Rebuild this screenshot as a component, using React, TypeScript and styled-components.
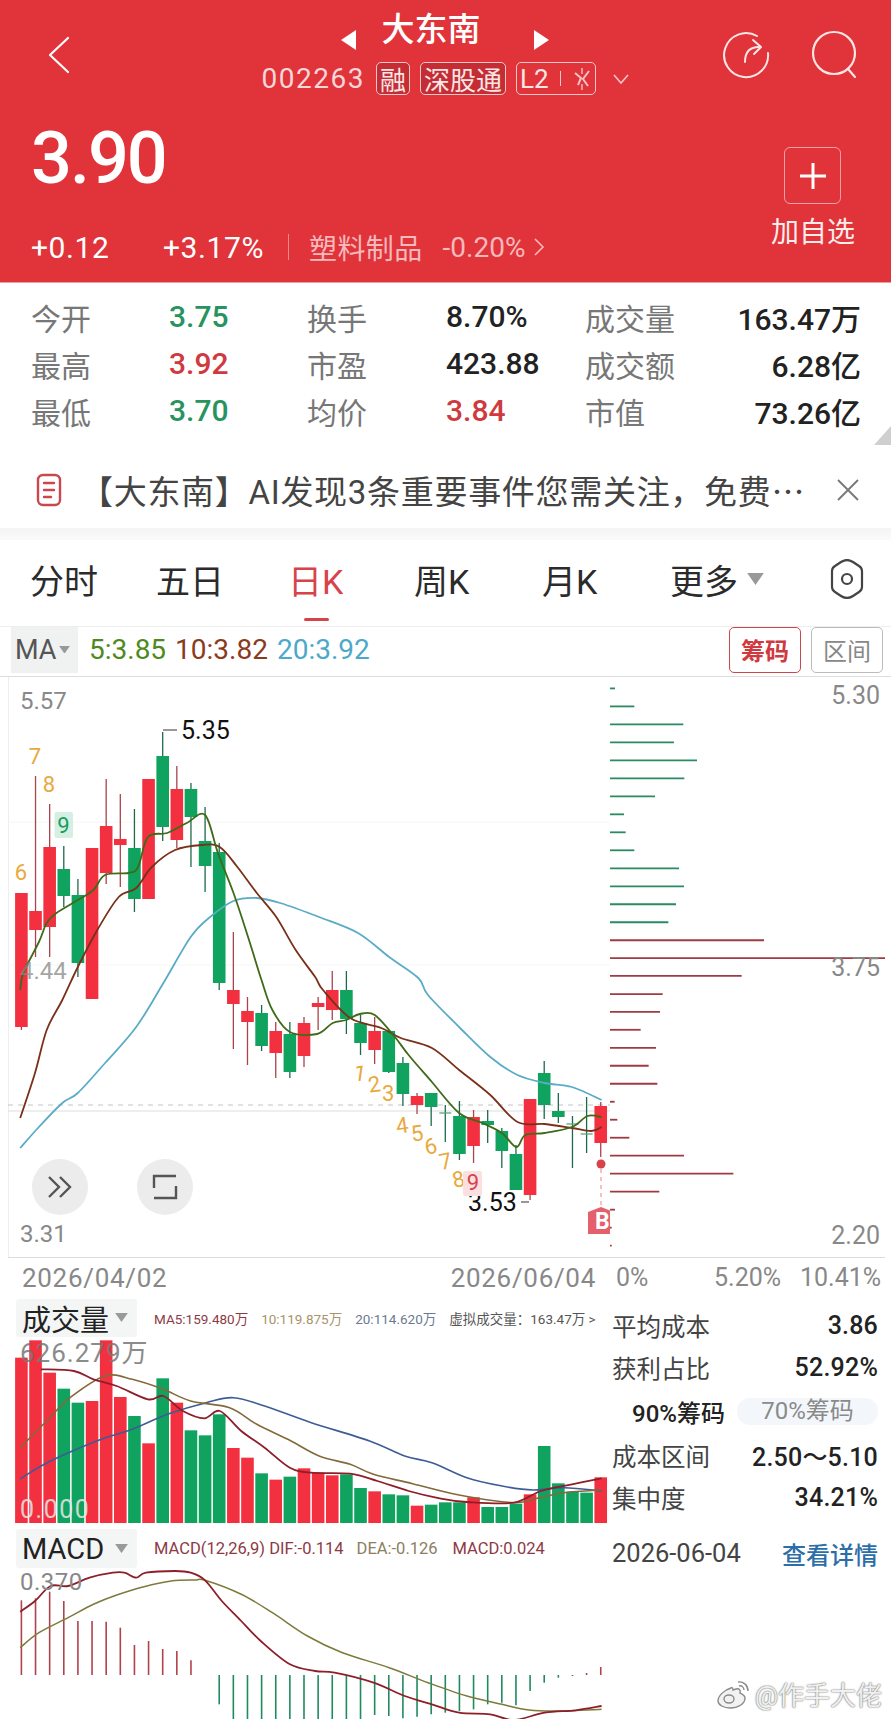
import React from 'react'
import styled, { createGlobalStyle } from 'styled-components'

const FONT = `Roboto, "Noto Sans CJK SC", "Noto Sans", sans-serif`
const RED = '#f2303f'
const GREEN = '#0fa35f'

const GlobalStyle = createGlobalStyle`
  html, body {
    margin: 0;
    padding: 0;
    background: #fff;
    font-family: ${FONT};
  }
`

const Page = styled.div`
  position: relative;
  width: 891px;
  height: 1719px;
  overflow: hidden;
  background: #fff;
`

/* header */
const Header = styled.header`
  height: 283px;
  background: #e1333a;
  color: #fff;
  border-bottom: 1px solid #e8a0a3;
  box-sizing: border-box;
`

const TopBar = styled.div`
  display: grid;
  grid-template-columns: 1fr auto 1fr;
  height: 110px;
`

const TopLeft = styled.div`
  display: flex;
  align-items: center;
  padding-left: 46px;
`

const TopRight = styled.div`
  display: flex;
  align-items: center;
  justify-content: flex-end;
  gap: 40px;
  padding-right: 32px;
`

const TitleBlock = styled.div`
  display: flex;
  flex-direction: column;
  align-items: center;
  padding-top: 8px;
`

const TitleRow = styled.div`
  display: flex;
  align-items: flex-end;
`

const Title = styled.div`
  font-size: 33px;
  line-height: 44px;
  font-weight: 500;
  margin: 0 54px 0 25px;
`

const Caret = styled.svg`
  display: block;
  margin-bottom: 2px;
`

const CodeRow = styled.div`
  display: flex;
  align-items: center;
  gap: 10px;
  margin-top: 10px;
  color: #f6d7d8;
`

const Code = styled.span`
  font-size: 28px;
  letter-spacing: 1.5px;
  margin-right: 1px;
`

const Tag = styled.span<{ $plain?: boolean }>`
  display: inline-flex;
  align-items: center;
  gap: 11px;
  height: 33px;
  padding: 0 3px;
  box-sizing: border-box;
  border: 1.5px solid #f4c6c8;
  border-radius: 5px;
  font-size: 26px;
  color: #fbe6e6;
  background: ${(p) => (p.$plain ? 'transparent' : '#c52d34')};
`

const TagDivider = styled.i`
  width: 1px;
  height: 15px;
  background: #f4c6c8;
`

const ChevronSlot = styled.span`
  display: flex;
  margin-left: 6px;
`

const HeaderBody = styled.div`
  display: flex;
  justify-content: space-between;
  padding: 0 36px 0 31px;
`

const PriceCol = styled.div`
  display: flex;
  flex-direction: column;
`

const Price = styled.div`
  font-size: 72px;
  line-height: 76px;
  height: 76px;
  margin-top: 11px;
  margin-bottom: -3px;
  letter-spacing: -2px;
  font-weight: 500;
`

const ChangeRow = styled.div`
  display: flex;
  align-items: center;
  height: 36px;
  margin-top: 35px;
  font-size: 30px;
`

const ChangeValue = styled.span<{ $width: number }>`
  width: ${(p) => p.$width}px;
  letter-spacing: 0.6px;
`

const ChangeDivider = styled.i`
  width: 1px;
  height: 26px;
  margin: 0 20px;
  background: #ee8a8e;
`

const Sector = styled.span`
  color: #f6b9bb;
  font-size: 28px;
  letter-spacing: 0.4px;
`

const SectorChange = styled.span`
  color: #f6b9bb;
  font-size: 28px;
  margin-left: 20px;
`

const SectorArrow = styled.svg`
  margin-left: 8px;
`

const AddCol = styled.div`
  display: flex;
  flex-direction: column;
  align-items: center;
`

const AddBox = styled.div`
  display: flex;
  align-items: center;
  justify-content: center;
  width: 57px;
  height: 57px;
  margin-top: 37px;
  border: 1.5px solid #f0a0a4;
  border-radius: 6px;
  box-sizing: border-box;
`

const AddLabel = styled.div`
  margin-top: 14px;
  font-size: 28px;
  line-height: 30px;
  color: #fdecec;
`

/* stat grid */
const Stats = styled.section`
  position: relative;
  display: grid;
  grid-template-columns: 138px 138px 139px 139px 110px 1fr;
  grid-auto-rows: 47px;
  align-items: center;
  height: 162px;
  padding: 10px 30px 0 31px;
  box-sizing: border-box;
  font-size: 30px;
`

const StatLabel = styled.span`
  color: #777;
  font-size: 30px;
`

const StatValue = styled.span<{ $tone?: 'up' | 'down'; $right?: boolean }>`
  color: ${(p) => (p.$tone === 'up' ? '#cf3a40' : p.$tone === 'down' ? '#27935f' : '#222')};
  text-align: ${(p) => (p.$right ? 'right' : 'left')};
  font-weight: 500;
`

const Corner = styled.i`
  position: absolute;
  right: 0;
  bottom: 0;
  width: 0;
  height: 0;
  border-style: solid;
  border-width: 0 0 19px 17px;
  border-color: transparent transparent #cfcfcf transparent;
`

/* news strip */
const News = styled.section`
  display: flex;
  align-items: center;
  height: 83px;
  padding: 6px 28px 0 36px;
  box-sizing: border-box;
  font-size: 33px;
  letter-spacing: 0.7px;
  color: #444;
`

const NewsText = styled.span`
  width: 730px;
  margin-left: 18px;
  margin-right: 26px;
  white-space: nowrap;
`

const Band = styled.div`
  height: 12px;
  background: linear-gradient(#f4f4f4, #fafafa);
`

/* period tabs */
const Tabs = styled.nav`
  display: flex;
  align-items: center;
  height: 87px;
  padding: 0 26px 8px 30px;
  box-sizing: border-box;
  border-bottom: 1px solid #eee;
`

const Tab = styled.span<{ $active?: boolean; $slot?: number }>`
  position: relative;
  flex: none;
  width: ${(p) => (p.$slot ? `${p.$slot}px` : 'auto')};
  font-size: 34px;
  color: ${(p) => (p.$active ? '#d8434b' : '#2b2b2b')};

  &::after {
    content: '';
    display: ${(p) => (p.$active ? 'block' : 'none')};
    position: absolute;
    left: 16px;
    bottom: -17px;
    width: 25px;
    height: 3px;
    border-radius: 2px;
    background: #d8434b;
  }
`

const TabMore = styled.div`
  display: flex;
  align-items: center;
  gap: 9px;
`

const TabIcon = styled.div`
  margin-left: auto;
  display: flex;
`

/* MA row */
const MaRow = styled.div`
  display: flex;
  align-items: center;
  height: 50px;
  padding: 0 8px 4px 11px;
  box-sizing: border-box;
  border-bottom: 1px solid #ddd;
  font-size: 28px;
`

const MaBox = styled.div`
  display: flex;
  align-items: center;
  gap: 3px;
  width: 67px;
  height: 46px;
  padding-left: 4px;
  box-sizing: border-box;
  background: #f0f1f1;
  color: #555;
  font-size: 27px;
  margin-right: 11px;
`

const MaValue = styled.span<{ $color: string }>`
  color: ${(p) => p.$color};
  margin-right: 9px;
`

const MaSpacer = styled.div`
  flex: 1;
`

const MaButton = styled.div<{ $active?: boolean }>`
  display: flex;
  align-items: center;
  justify-content: center;
  width: 72px;
  height: 46px;
  margin-left: 10px;
  box-sizing: border-box;
  border: 1.5px solid ${(p) => (p.$active ? '#c9474d' : '#bbb')};
  border-radius: 5px;
  font-size: 24px;
  font-weight: ${(p) => (p.$active ? 700 : 400)};
  color: ${(p) => (p.$active ? '#cf3a40' : '#888')};
`

/* charts */
const ChartRow = styled.div`
  position: relative;
  display: flex;
  height: 580px;
  border-bottom: 1px solid #ddd;
  margin-left: 8px;
  margin-right: 6px;
`

const ChartSvg = styled.svg`
  display: block;
  flex: none;
`

const RoundButton = styled.div<{ $left: number }>`
  position: absolute;
  left: ${(p) => p.$left}px;
  top: 482px;
  display: flex;
  align-items: center;
  justify-content: center;
  width: 56px;
  height: 56px;
  border-radius: 50%;
  background: #ececec;
`

const AxisRow = styled.div`
  display: flex;
  height: 39px;
  align-items: center;
  font-size: 25px;
  color: #888;
`

const AxisDates = styled.div`
  display: flex;
  justify-content: space-between;
  width: 610px;
  padding: 0 14px 0 22px;
  box-sizing: border-box;
  font-size: 26px;
  letter-spacing: 0.7px;
`

const AxisPercents = styled.div`
  display: grid;
  grid-template-columns: 98px 86px auto;
  padding-left: 6px;
`

const Lower = styled.div`
  display: flex;
`

const LeftCol = styled.div`
  width: 610px;
  flex: none;
  padding-top: 2px;
`

const SectionHead = styled.div<{ $height: number; $mt?: number; $mb?: number }>`
  display: flex;
  align-items: center;
  height: ${(p) => p.$height}px;
  margin-top: ${(p) => p.$mt ?? 0}px;
  margin-bottom: ${(p) => p.$mb ?? 0}px;
`

const HeadBox = styled.div`
  display: flex;
  align-items: center;
  justify-content: space-between;
  width: 121px;
  height: 100%;
  margin-left: 16px;
  margin-right: 17px;
  padding: 0 9px 0 6px;
  box-sizing: border-box;
  background: #f4f5f5;
  border-radius: 3px;
  font-size: 29px;
  color: #222;
`

const HeadLegend = styled.div<{ $size: number }>`
  display: flex;
  white-space: nowrap;
  font-size: ${(p) => p.$size}px;
`

const LegendItem = styled.span<{ $color: string; $gap: number }>`
  color: ${(p) => p.$color};
  margin-right: ${(p) => p.$gap}px;
`

const RightCol = styled.div`
  flex: 1;
  padding: 7px 13px 0 2px;
  color: #333;
`

const SummaryRow = styled.div<{ $mt?: number }>`
  display: flex;
  justify-content: space-between;
  align-items: center;
  height: 42px;
  margin-top: ${(p) => p.$mt ?? 0}px;
  font-size: 24.5px;
  color: #444;
`

const SummaryValue = styled.span`
  font-size: 25px;
  letter-spacing: 0.2px;
  font-weight: 500;
  color: #222;
`

const RangeTabs = styled.div`
  display: flex;
  align-items: center;
  height: 46px;
  padding-left: 20px;
  font-size: 24px;
`

const RangeActive = styled.span`
  width: 105px;
  color: #222;
  font-weight: 500;
`

const RangeIdle = styled.span`
  flex: 1;
  height: 27px;
  line-height: 27px;
  text-align: center;
  color: #8a8a8a;
  background: #f3f7fb;
  border-radius: 13px;
`

const DetailLink = styled.span`
  color: #2c6ea8;
  font-size: 24px;
  font-weight: 500;
`

const DateText = styled.span`
  font-size: 25.5px;
  color: #444;
`

const Watermark = styled.div`
  position: absolute;
  right: 9px;
  bottom: 7px;
  display: flex;
  align-items: center;
  gap: 4px;
  font-size: 26px;
  color: #f0f0f0;
  text-shadow: 0 0 2px #777, 0 0 1px #777;
`

/* data, in page pixels */
type Candle = [string, number, number, number, number]
const candles: Candle[] = [
  ['r', 893, 893, 1027, 1030],
  ['r', 776, 911, 930, 957],
  ['r', 804, 847, 927, 957],
  ['g', 846, 869, 896, 907],
  ['g', 879, 895, 963, 977],
  ['r', 848, 848, 999, 999],
  ['r', 779, 826, 873, 884],
  ['r', 794, 839, 845, 887],
  ['g', 809, 848, 899, 912],
  ['r', 779, 779, 899, 899],
  ['g', 732, 756, 827, 841],
  ['r', 766, 789, 840, 848],
  ['g', 783, 789, 817, 867],
  ['g', 807, 841, 866, 892],
  ['g', 843, 852, 983, 990],
  ['r', 932, 990, 1004, 1049],
  ['r', 997, 1011, 1022, 1065],
  ['g', 1005, 1013, 1046, 1051],
  ['r', 1022, 1031, 1053, 1078],
  ['g', 1022, 1034, 1072, 1078],
  ['r', 1017, 1023, 1056, 1067],
  ['r', 997, 1003, 1007, 1030],
  ['r', 971, 990, 1010, 1020],
  ['g', 971, 990, 1019, 1034],
  ['g', 1015, 1023, 1043, 1055],
  ['r', 1017, 1031, 1050, 1064],
  ['g', 1030, 1031, 1072, 1073],
  ['g', 1057, 1063, 1094, 1106],
  ['r', 1093, 1096, 1105, 1114],
  ['g', 1093, 1093, 1107, 1126],
  ['g', 1105, 1113, 1114, 1142],
  ['g', 1101, 1116, 1154, 1160],
  ['r', 1110, 1117, 1146, 1163],
  ['g', 1110, 1121, 1125, 1143],
  ['g', 1128, 1131, 1151, 1168],
  ['g', 1145, 1154, 1190, 1190],
  ['r', 1099, 1099, 1195, 1200],
  ['g', 1061, 1073, 1105, 1119],
  ['g', 1093, 1111, 1117, 1123],
  ['g', 1116, 1124, 1125, 1168],
  ['g', 1097, 1134, 1135, 1153],
  ['r', 1102, 1106, 1143, 1157],
]

const xOf = (i: number) => 21.4 + 14.13 * i
const zx = (v: number) => (v / 2.57).toFixed(1)
const zoomY = (base: number, pts: number[][]) => pts.map(([x, y]) => [x, base + y / 3])

// catmull-rom through the sampled points so the averages read as curves
const toPath = (pts: number[][]) => {
  const p = pts.map(([x, y]) => [x / 2.57, y])
  const f = (n: number) => n.toFixed(1)
  let d = `M${f(p[0][0])} ${f(p[0][1])}`
  for (let i = 0; i < p.length - 1; i++) {
    const a = p[Math.max(i - 1, 0)]
    const b = p[i]
    const c = p[i + 1]
    const e = p[Math.min(i + 2, p.length - 1)]
    d += `C${f(b[0] + (c[0] - a[0]) / 6)} ${f(b[1] + (c[1] - a[1]) / 6)} ${f(c[0] - (e[0] - b[0]) / 6)} ${f(c[1] - (e[1] - b[1]) / 6)} ${f(c[0])} ${f(c[1])}`
  }
  return d
}

const ma5 = [[52,990],[60,973],[100,942],[120,923],[145,913],[200,900],[240,890],[270,875],[330,873],[355,867],[380,837],[430,833],[480,823],[527,815],[560,853],[600,893],[640,940],[672,980],[700,1010],[745,1032],[815,1034],[855,1023],[890,1020],[925,1014],[963,1015],[1015,1037],[1050,1055],[1110,1082],[1180,1113],[1240,1123],[1290,1133],[1327,1147],[1350,1135],[1400,1133],[1470,1127],[1510,1116],[1546,1117]]
const ma10 = [[52,1118],[90,1073],[120,1030],[160,1000],[200,967],[250,930],[305,897],[350,888],[390,867],[450,850],[520,845],[565,847],[610,867],[660,893],[710,917],[760,950],[810,977],[830,990],[900,1018],[980,1028],[1030,1038],[1110,1048],[1180,1070],[1260,1095],[1330,1122],[1400,1124],[1470,1128],[1520,1131],[1546,1127]]
const ma20 = [[52,1148],[100,1127],[160,1103],[200,1093],[270,1063],[350,1027],[420,983],[490,937],[540,917],[600,901],[660,898],[720,903],[820,917],[920,933],[1000,957],[1075,978],[1100,995],[1180,1027],[1260,1057],[1330,1075],[1400,1083],[1470,1087],[1546,1100]]

const chips: [number, number][] = [
  [22,45],[69,103],[116,250],[163,222],[210,291],[257,253],[304,165],[351,72],[398,77],[445,103],[492,237],[539,252],[586,228],[633,205],
  [680,492],[727,855],[773,425],[821,188],[867,180],[914,122],[961,168],[1008,146],[1055,172],[1102,44],[1149,52],[1196,88],[1243,252],[1290,400],[1337,178],[1384,45],[1431,35],[1478,35],
]

const volTops = [200,148,245,293,335,330,148,318,375,457,262,335,418,433,370,471,500,547,566,557,532,545,553,550,591,601,610,613,644,641,634,634,619,648,648,638,610,465,577,602,605,559]
const volMa5 = [[105,235],[190,240],[240,265],[300,285],[380,325],[420,315],[470,360],[525,382],[565,360],[620,420],[680,470],[745,530],[800,545],[900,548],[970,570],[1050,600],[1130,622],[1200,633],[1320,635],[1390,600],[1470,580],[1546,562]]
const volMa10 = [[52,470],[120,390],[180,320],[270,255],[340,265],[420,295],[490,330],[590,350],[660,400],[740,445],[820,495],[900,520],[960,550],[1060,578],[1180,612],[1320,635],[1380,622],[1450,605],[1546,597]]
const volMa20 = [[52,563],[130,510],[260,445],[340,415],[430,370],[530,335],[600,320],[680,345],[800,395],[950,450],[1040,495],[1110,515],[1200,560],[1290,585],[1370,597],[1450,590],[1546,600]]

const macdUp = [238,232,212,240,300,300,302,320,372,360,384,390,418]
const macdDown = [550,640,640,640,640,640,640,640,640,640,640,582,585,592,587,580,575,570,565,550,545,553,510,485,470,465]
const dif = [[52,272],[90,240],[130,195],[175,195],[230,170],[290,155],[320,155],[350,170],[375,155],[450,150],[490,155],[527,178],[570,240],[620,300],[670,360],[745,430],[810,450],[860,455],[960,485],[1040,525],[1110,550],[1180,575],[1260,580],[1320,597],[1400,575],[1480,568],[1546,555]]
const dea = [[52,380],[100,335],[175,290],[240,250],[300,222],[370,197],[440,180],[500,177],[527,178],[620,220],[700,275],[790,345],[880,395],[1000,440],[1100,485],[1200,525],[1290,550],[1360,567],[1430,570],[1546,565]]

const seqNumbers: [string, number, number, number][] = [
  ['1', 925, 1073, 8], ['2', 962, 1084, -8], ['3', 998, 1093, 0], ['4', 1033, 1125, -8], ['5', 1072, 1133, -8],
  ['6', 1107, 1146, -12], ['7', 1145, 1161, -12], ['8', 1178, 1179, -12],
]

const iconProps = { fill: 'none', stroke: '#fff', strokeLinecap: 'round' as const, strokeLinejoin: 'round' as const }

const BackIcon = () => (
  <svg width="26" height="40" viewBox="0 0 26 40" {...iconProps} strokeWidth="2.2">
    <path d="M22 3 4 20l18 17" />
  </svg>
)

const ShareIcon = () => (
  <svg width="48" height="50" viewBox="0 0 48 50" {...iconProps} stroke="#fbe6e6" strokeWidth="2">
    <path d="M34 6A22 22 0 1 0 45 23" />
    <path d="M22 32c0-9 4-15 14-15" />
    <path d="m30 10 8 7-7 7" />
  </svg>
)

const SearchIcon = () => (
  <svg width="48" height="50" viewBox="0 0 48 50" {...iconProps} stroke="#fbe6e6" strokeWidth="2.2">
    <circle cx="23" cy="23" r="21" />
    <path d="m37 39 7 8" />
  </svg>
)

const BoltIcon = () => (
  <svg width="20" height="24" viewBox="0 0 20 24" fill="none" stroke="#f7c2c4" strokeWidth="2">
    <path d="M3 6 9 11 6 18M17 4l-6 8 5 7" />
    <path d="M10 1v6M10 17v6" stroke="#e99" />
  </svg>
)

const SmallChevron = () => (
  <svg width="18" height="12" viewBox="0 0 18 12" fill="none" stroke="#f4c6c8" strokeWidth="1.6">
    <path d="m2 2 7 8 7-8" />
  </svg>
)

const NewsIcon = () => (
  <svg width="26" height="34" viewBox="0 0 26 34" fill="none" stroke="#c9474d" strokeWidth="2.4" strokeLinecap="round">
    <rect x="2" y="2" width="22" height="30" rx="5" />
    <path d="M8 10h10M8 17h10M8 24h7" />
  </svg>
)

const CloseIcon = () => (
  <svg width="24" height="24" viewBox="0 0 24 24" fill="none" stroke="#777" strokeWidth="1.8">
    <path d="m2 2 20 20M22 2 2 22" />
  </svg>
)

const SettingsIcon = () => (
  <svg width="36" height="40" viewBox="0 0 36 40" fill="none" stroke="#444" strokeWidth="2.2" strokeLinejoin="round">
    <path d="M12 3a11 11 0 0 1 12 0l6 4a6 6 0 0 1 3 5v16a6 6 0 0 1-3 5l-6 4a11 11 0 0 1-12 0l-6-4a6 6 0 0 1-3-5V12a6 6 0 0 1 3-5Z" />
    <circle cx="18" cy="20" r="5" />
  </svg>
)

const DownTriangle = ({ size = 14, color = '#999' }: { size?: number; color?: string }) => (
  <svg width={size} height={size * 0.7} viewBox="0 0 14 10">
    <path d="M0 0h14L7 10Z" fill={color} />
  </svg>
)

const WeiboIcon = () => (
  <svg width="34" height="30" viewBox="0 0 34 30" fill="#f2f2f2" stroke="#8a8a8a" strokeWidth="1.4">
    <path d="M14 9C7 11 1 17 1 22c0 4 6 7 12 7 8 0 15-4 15-10 0-3-3-4-5-5 1-3-1-5-4-4l-3 1c0-2-1-3-2-2Z" />
    <ellipse cx="12" cy="20" rx="5" ry="4" fill="none" />
    <path d="M21 3c5-1 10 3 10 9M22 7c3-1 5 2 5 4" fill="none" />
  </svg>
)

const MainChart = () => (
  <ChartSvg width="602" height="580" viewBox="8 677 602 580" fontFamily={FONT}>
    <line x1="8.5" y1="677" x2="8.5" y2="1257" stroke="#eee" />
    <line x1="8" y1="822" x2="610" y2="822" stroke="#f6f6f6" />
    <line x1="8" y1="965" x2="610" y2="965" stroke="#f6f6f6" />
    <line x1="8" y1="1111" x2="610" y2="1111" stroke="#ddd" />
    <line x1="8" y1="1105" x2="610" y2="1105" stroke="#c4c4c4" strokeDasharray="5 5" />
    {candles.map(([c, hi, top, bot, lo], i) => {
      const x = xOf(i)
      const h = bot - top
      const thin = h <= 1
      return (
        <g key={i}>
          <line x1={x} y1={hi} x2={x} y2={lo} stroke={c === 'r' ? '#a9434c' : '#1d6a4a'} strokeWidth="1.3" />
          {thin ? (
            <line x1={x - 6} y1={top} x2={x + 6} y2={top} stroke="#5aa583" strokeWidth="1.3" />
          ) : (
            <rect x={x - 6.3} y={top} width="12.6" height={h} fill={c === 'r' ? RED : GREEN} />
          )}
        </g>
      )
    })}
    <path d={toPath(ma20)} fill="none" stroke="#5aacc6" strokeWidth="1.8" />
    <path d={toPath(ma10)} fill="none" stroke="#7a3018" strokeWidth="1.8" />
    <path d={toPath(ma5)} fill="none" stroke="#3f6a18" strokeWidth="1.8" />

    <g fontSize="24" fill="#888">
      <text x="20" y="709">5.57</text>
      <text x="20" y="979" opacity="0.75">4.44</text>
      <text x="20" y="1242">3.31</text>
    </g>
    <g fontSize="25" fill="#111">
      <line x1="163" y1="730" x2="177" y2="730" stroke="#555" strokeWidth="1.2" />
      <text x="181" y="739">5.35</text>
      <text x="468" y="1211">3.53</text>
      <line x1="521" y1="1202" x2="529" y2="1202" stroke="#555" strokeWidth="1.2" />
    </g>

    <g fontSize="22" fill="#e8a93c" textAnchor="middle">
      <text x="21" y="880">6</text>
      <text x="35" y="764">7</text>
      <text x="49" y="792">8</text>
      {seqNumbers.map(([n, x, y, r]) => (
        <text key={n} x={zx(x)} y={y + 8} transform={`rotate(${r} ${zx(x)} ${y})`}>{n}</text>
      ))}
    </g>
    <rect x="54.5" y="812" width="18.5" height="26" rx="2" fill="#d5efe2" />
    <text x="63.5" y="833" fontSize="22" fill="#1b9c63" textAnchor="middle">9</text>
    <rect x="463" y="1171" width="19" height="25" rx="2" fill="#fbe0e2" />
    <text x="473" y="1190" fontSize="22" fill="#d8434b" textAnchor="middle">9</text>

    <circle cx="601" cy="1164" r="4.5" fill="#d8434b" />
    <line x1="601" y1="1169" x2="601" y2="1205" stroke="#e8848a" strokeDasharray="4 4" />
    <path d="M588 1212l13-5 13 5v22h-26Z" fill="#e4606c" />
    <text x="595" y="1229" fontSize="23" fontWeight="700" fill="#fff">B</text>
  </ChartSvg>
)

const ChipChart = () => (
  <ChartSvg width="275" height="580" viewBox="610 677 275 580" fontFamily={FONT}>
    {chips.map(([y, end], i) => (
      <line
        key={y}
        x1="610"
        y1={680 + y / 2.613}
        x2={600 + end / 3}
        y2={680 + y / 2.613}
        stroke={i < 14 ? '#2a8a62' : '#a03a42'}
        strokeWidth="1.8"
      />
    ))}
    <g fontSize="25" fill="#888" textAnchor="end">
      <text x="880" y="704">5.30</text>
      <text x="880" y="976">3.75</text>
      <text x="880" y="1244">2.20</text>
    </g>
  </ChartSvg>
)

const VolumeChart = () => (
  <ChartSvg width="610" height="184" viewBox="0 1338 610 184" fontFamily={FONT}>
    {volTops.map((t, i) => (
      <rect
        key={i}
        x={xOf(i) - 6.3}
        y={1290 + t / 3}
        width="12.6"
        height={1522 - (1290 + t / 3)}
        fill={candles[i][0] === 'r' ? RED : GREEN}
      />
    ))}
    <path d={toPath(zoomY(1290, volMa20))} fill="none" stroke="#3d5c96" strokeWidth="1.6" />
    <path d={toPath(zoomY(1290, volMa10))} fill="none" stroke="#84693a" strokeWidth="1.6" />
    <path d={toPath(zoomY(1290, volMa5))} fill="none" stroke="#8d1f2a" strokeWidth="1.8" />
    <text x="20" y="1361" fontSize="26" letterSpacing="1" fill="#777" opacity="0.85">626.279万</text>
    <text x="20" y="1517" fontSize="25" letterSpacing="1.5" fill="#e6e6e6" opacity="0.85">0.000</text>
  </ChartSvg>
)

const MacdChart = () => (
  <ChartSvg width="610" height="152" viewBox="0 1567 610 152" fontFamily={FONT}>
    {macdUp.map((t, i) => (
      <line key={i} x1={xOf(i)} y1={1520 + t / 3} x2={xOf(i)} y2="1674" stroke="#b0424b" strokeWidth="1.6" />
    ))}
    {macdDown.map((b, i) => (
      <line key={i} x1={xOf(i + 14)} y1="1674" x2={xOf(i + 14)} y2={1520 + b / 3} stroke="#1f8a5e" strokeWidth="1.6" />
    ))}
    <line x1={xOf(40)} y1="1672" x2={xOf(40)} y2="1674" stroke="#b0424b" strokeWidth="1.6" />
    <line x1={xOf(41)} y1="1666" x2={xOf(41)} y2="1674" stroke="#b0424b" strokeWidth="1.6" />
    <path d={toPath(zoomY(1520, dea))} fill="none" stroke="#7d7a3c" strokeWidth="1.5" />
    <path d={toPath(zoomY(1520, dif))} fill="none" stroke="#8d1f2a" strokeWidth="1.8" />
    <text x="20" y="1589" fontSize="24" letterSpacing="0.5" fill="#888">0.370</text>
  </ChartSvg>
)

const App: React.FC = () => (
  <Page>
    <GlobalStyle />
    <Header>
      <TopBar>
        <TopLeft>
          <BackIcon />
        </TopLeft>
        <TitleBlock>
          <TitleRow>
            <Caret width="15" height="20" viewBox="0 0 15 20">
              <path d="M15 0v20L0 10Z" fill="#fff" />
            </Caret>
            <Title>大东南</Title>
            <Caret width="15" height="20" viewBox="0 0 15 20">
              <path d="M0 0v20l15-10Z" fill="#fff" />
            </Caret>
          </TitleRow>
          <CodeRow>
            <Code>002263</Code>
            <Tag>融</Tag>
            <Tag>深股通</Tag>
            <Tag $plain>
              L2
              <TagDivider />
              <BoltIcon />
            </Tag>
            <ChevronSlot>
              <SmallChevron />
            </ChevronSlot>
          </CodeRow>
        </TitleBlock>
        <TopRight>
          <ShareIcon />
          <SearchIcon />
        </TopRight>
      </TopBar>
      <HeaderBody>
        <PriceCol>
          <Price>3.90</Price>
          <ChangeRow>
            <ChangeValue $width={132}>+0.12</ChangeValue>
            <ChangeValue $width={105}>+3.17%</ChangeValue>
            <ChangeDivider />
            <Sector>塑料制品</Sector>
            <SectorChange>-0.20%</SectorChange>
            <SectorArrow width="12" height="20" viewBox="0 0 12 20" fill="none" stroke="#f6b9bb" strokeWidth="1.6">
              <path d="m2 2 8 8-8 8" />
            </SectorArrow>
          </ChangeRow>
        </PriceCol>
        <AddCol>
          <AddBox>
            <svg width="28" height="28" viewBox="0 0 28 28" stroke="#fff" strokeWidth="3">
              <path d="M14 1v26M1 14h26" />
            </svg>
          </AddBox>
          <AddLabel>加自选</AddLabel>
        </AddCol>
      </HeaderBody>
    </Header>

    <Stats>
      <StatLabel>今开</StatLabel>
      <StatValue $tone="down">3.75</StatValue>
      <StatLabel>换手</StatLabel>
      <StatValue>8.70%</StatValue>
      <StatLabel>成交量</StatLabel>
      <StatValue $right>163.47万</StatValue>
      <StatLabel>最高</StatLabel>
      <StatValue $tone="up">3.92</StatValue>
      <StatLabel>市盈</StatLabel>
      <StatValue>423.88</StatValue>
      <StatLabel>成交额</StatLabel>
      <StatValue $right>6.28亿</StatValue>
      <StatLabel>最低</StatLabel>
      <StatValue $tone="down">3.70</StatValue>
      <StatLabel>均价</StatLabel>
      <StatValue $tone="up">3.84</StatValue>
      <StatLabel>市值</StatLabel>
      <StatValue $right>73.26亿</StatValue>
      <Corner />
    </Stats>

    <News>
      <NewsIcon />
      <NewsText>【大东南】AI发现3条重要事件您需关注，免费⋯</NewsText>
      <CloseIcon />
    </News>
    <Band />

    <Tabs>
      <Tab $slot={126}>分时</Tab>
      <Tab $slot={132}>五日</Tab>
      <Tab $active $slot={126}>日K</Tab>
      <Tab $slot={128}>周K</Tab>
      <Tab $slot={128}>月K</Tab>
      <TabMore>
        <Tab>更多</Tab>
        <DownTriangle size={17} />
      </TabMore>
      <TabIcon>
        <SettingsIcon />
      </TabIcon>
    </Tabs>

    <MaRow>
      <MaBox>
        MA
        <DownTriangle size={11} />
      </MaBox>
      <MaValue $color="#4f8a20">5:3.85</MaValue>
      <MaValue $color="#8b3a1c">10:3.82</MaValue>
      <MaValue $color="#4ba9c9">20:3.92</MaValue>
      <MaSpacer />
      <MaButton $active>筹码</MaButton>
      <MaButton>区间</MaButton>
    </MaRow>

    <ChartRow>
      <MainChart />
      <ChipChart />
      <RoundButton $left={24}>
        <svg width="26" height="24" viewBox="0 0 26 24" fill="none" stroke="#555" strokeWidth="2.4">
          <path d="m2 2 10 10L2 22M13 2l10 10-10 10" />
        </svg>
      </RoundButton>
      <RoundButton $left={129}>
        <svg width="26" height="28" viewBox="0 0 26 28" fill="none" stroke="#555" strokeWidth="2.4">
          <path d="M24 3H2v12M2 25h22V13" />
        </svg>
      </RoundButton>
    </ChartRow>

    <AxisRow>
      <AxisDates>
        <span>2026/04/02</span>
        <span>2026/06/04</span>
      </AxisDates>
      <AxisPercents>
        <span>0%</span>
        <span>5.20%</span>
        <span>10.41%</span>
      </AxisPercents>
    </AxisRow>

    <Lower>
      <LeftCol>
        <SectionHead $height={38} $mb={2}>
          <HeadBox>
            成交量
            <DownTriangle size={13} />
          </HeadBox>
          <HeadLegend $size={13.5}>
            <LegendItem $color="#8d3a45" $gap={13}>MA5:159.480万</LegendItem>
            <LegendItem $color="#a8936a" $gap={13}>10:119.875万</LegendItem>
            <LegendItem $color="#6b7a90" $gap={13}>20:114.620万</LegendItem>
            <LegendItem $color="#555" $gap={0}>虚拟成交量：163.47万 &gt;</LegendItem>
          </HeadLegend>
        </SectionHead>
        <VolumeChart />
        <SectionHead $height={39} $mt={6}>
          <HeadBox>
            MACD
            <DownTriangle size={13} />
          </HeadBox>
          <HeadLegend $size={16.5}>
            <LegendItem $color="#8d3a45" $gap={13}>MACD(12,26,9) DIF:-0.114</LegendItem>
            <LegendItem $color="#8a8060" $gap={15}>DEA:-0.126</LegendItem>
            <LegendItem $color="#8d3a45" $gap={0}>MACD:0.024</LegendItem>
          </HeadLegend>
        </SectionHead>
        <MacdChart />
      </LeftCol>
      <RightCol>
        <SummaryRow>
          平均成本
          <SummaryValue>3.86</SummaryValue>
        </SummaryRow>
        <SummaryRow>
          获利占比
          <SummaryValue>52.92%</SummaryValue>
        </SummaryRow>
        <RangeTabs>
          <RangeActive>90%筹码</RangeActive>
          <RangeIdle>70%筹码</RangeIdle>
        </RangeTabs>
        <SummaryRow>
          成本区间
          <SummaryValue>2.50～5.10</SummaryValue>
        </SummaryRow>
        <SummaryRow>
          集中度
          <SummaryValue>34.21%</SummaryValue>
        </SummaryRow>
        <SummaryRow $mt={14}>
          <DateText>2026-06-04</DateText>
          <DetailLink>查看详情</DetailLink>
        </SummaryRow>
      </RightCol>
    </Lower>

    <Watermark>
      <WeiboIcon />
      @作手大佬
    </Watermark>
  </Page>
)

export default App
